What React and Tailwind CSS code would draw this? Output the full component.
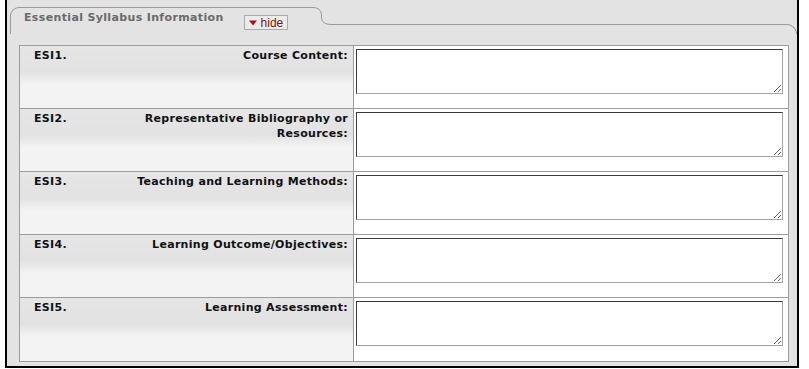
import React from 'react'

const rows = [
  { id: 'ESI1.', label: 'Course Content:' },
  { id: 'ESI2.', label: 'Representative Bibliography or Resources:' },
  { id: 'ESI3.', label: 'Teaching and Learning Methods:' },
  { id: 'ESI4.', label: 'Learning Outcome/Objectives:' },
  { id: 'ESI5.', label: 'Learning Assessment:' },
]

const SyllabusRow = ({ id, label, last }) => (
  <div className={`flex h-[63px] ${last ? '' : 'border-b border-[#9c9c9c]'}`}>
    <div className="w-[334px] shrink-0 border-r border-[#9c9c9c] flex justify-between pl-[14px] pr-[5px] pt-[2px] bg-[linear-gradient(to_bottom,#e6e6e6_0px,#e2e2e2_26px,#f3f3f3_38px,#f3f3f3_100%)]">
      <span className="font-bold text-[11px] leading-[15px] tracking-[0.3px] text-[#111]">{id}</span>
      <span className="w-[240px] text-right font-bold text-[11px] leading-[15px] tracking-[0.3px] text-[#111]">{label}</span>
    </div>
    <div className="flex-1 bg-white pl-[2px] pt-[3px]">
      <textarea className="block w-[427px] h-[45px] border border-t-[#3a3a3a] border-l-[#3a3a3a] border-r-[#a3a3a3] border-b-[#a3a3a3] bg-white resize outline-none" />
    </div>
  </div>
)

export default function App() {
  return (
    <div className="w-[809px] h-[369px] bg-white">
      <div className="ml-[5px] w-[794px] h-[368px] border-l-2 border-r-2 border-b-2 border-black bg-[#e3e3e3] flex flex-col font-['DejaVu_Sans',Verdana,sans-serif]">
        {/* tab header */}
        <div className="flex h-[34px] pt-[7px] pl-[3px]">
          <div className="w-[303px] h-[27px] border-t border-l border-[#9a9a9a] rounded-tl-[9px] flex items-start pl-[13px] pt-[3px]">
            <span className="font-bold text-[11px] leading-[14px] tracking-[0.35px] text-[#6a6a6a]">Essential Syllabus Information</span>
            <button className="ml-[20px] mt-[4px] h-[15px] px-[4px] flex items-center gap-[4px] bg-[#ebebeb] border border-[#ababab] font-['Liberation_Sans',Arial,sans-serif] text-[12px] leading-none text-[#7a1414]">
              <svg width="8" height="6" viewBox="0 0 8 6">
                <path d="M0 0.5 H8 L4 5.5 Z" fill="#b01010" />
              </svg>
              hide
            </button>
          </div>
          <svg width="18" height="27" viewBox="0 0 18 27" className="shrink-0">
            <path d="M0 0.5 Q8 0.5 8.5 8 L8.5 11 Q9 17.5 18 17.5" fill="none" stroke="#9a9a9a" strokeWidth="1" />
          </svg>
          <div className="flex-1 pt-[17px]">
            <div className="h-[10px] border-t border-r border-[#9a9a9a] rounded-tr-[10px]" />
          </div>
        </div>
        {/* panel body */}
        <div className="ml-[12px] mr-[8px] mt-[11px] border border-[#9c9c9c] bg-white">
          {rows.map((r, i) => (
            <SyllabusRow key={r.id} {...r} last={i === rows.length - 1} />
          ))}
        </div>
      </div>
    </div>
  )
}
